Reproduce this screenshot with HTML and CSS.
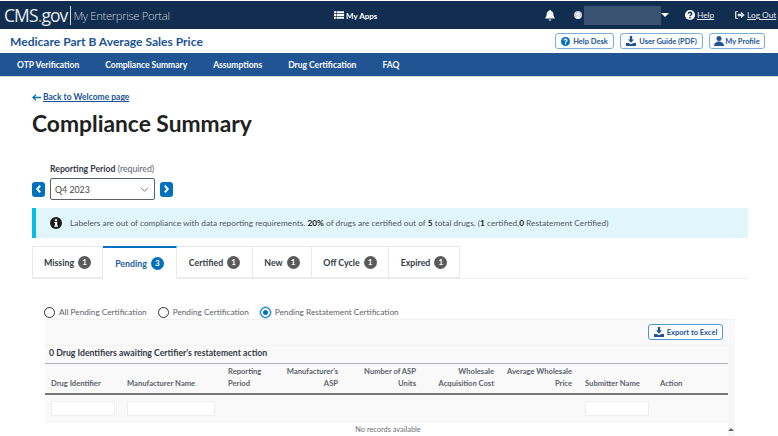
FILE: index.html
```html
<!DOCTYPE html>
<html lang="en">
<head>
<meta charset="utf-8">
<title>Compliance Summary</title>
<link rel="stylesheet" href="styles.css">
</head>
<body>
<header class="topbar">
  <div class="brand">
    <span class="logo">CMS<span class="logo-dot">.</span><span class="logo-gov">gov</span></span>
    <span class="portal">My Enterprise Portal</span>
  </div>
  <div class="apps">
    <svg class="i12" viewBox="0 0 12 10"><path fill="#fff" d="M0 0h2.500v2.400H0zM3.200 0H12v2.400H3.200zM0 3.300h2.500v2.400H0zM3.200 3.300H12v2.400H3.200zM0 6.600h2.500V9H0zM3.200 6.600H12V9H3.200z"/></svg>
    <span>My Apps</span>
  </div>
  <div class="tools">
    <svg class="bell" viewBox="0 0 10 11"><path fill="#fff" d="M5 0a1 1 0 0 1 1 1c2 .5 2.400 2 2.400 3.600 0 1.800.6 2.600 1.400 3.400v.6H.2V8C1 7.200 1.600 6.400 1.600 4.600 1.600 3 2 1.500 4 1a1 1 0 0 1 1-1zM3.700 9.400h2.600A1.300 1.300 0 0 1 3.700 9.400z"/></svg>
    <div class="user">
      <svg class="usericon" viewBox="0 0 10 10"><circle cx="5" cy="5" r="5" fill="#c9d0da"/><circle cx="5" cy="3.800" r="1.900" fill="#fff"/><path fill="#fff" d="M1.800 8.300c.5-2 5.900-2 6.400 0A5 5 0 0 1 1.800 8.300z"/></svg>
      <span class="redacted"></span>
      <span class="caret"></span>
    </div>
    <a class="help">
      <svg class="i12" viewBox="0 0 12 12"><circle cx="6" cy="6" r="6" fill="#fff"/><path fill="none" stroke="#112e51" stroke-width="1.700" d="M4 4.600c0-2.500 4-2.500 4 0 0 1.500-2 1.400-2 3"/><rect x="5.100" y="8.400" width="1.800" height="1.700" fill="#112e51"/></svg>
      <span class="ul">Help</span>
    </a>
    <a class="logout">
      <svg class="i10" viewBox="0 0 11 9"><path fill="#d5dae1" d="M3.500 0H1.500A1.500 1.500 0 0 0 0 1.500v6A1.500 1.500 0 0 0 1.500 9h2V7.800h-2V1.200h2zM6.500 1l4.300 3.500L6.500 8V6H3V3h3.500z"/></svg>
      <span class="ul">Log Out</span>
    </a>
  </div>
</header>

<div class="subhead">
  <div class="apptitle">Medicare Part B Average Sales Price</div>
  <div class="subbtns">
    <a class="btn btn-help">
      <svg class="i9" viewBox="0 0 10 10"><circle cx="5" cy="5" r="5" fill="#0071bc"/><path fill="none" stroke="#fff" stroke-width="1.400" d="M3.400 3.900c0-2 3.200-2 3.200 0 0 1.200-1.600 1.100-1.600 2.400"/><rect x="4.300" y="7" width="1.400" height="1.400" fill="#fff"/></svg>
      Help Desk
    </a>
    <a class="btn btn-guide">
      <svg class="i10" viewBox="0 0 10 10"><path fill="#205493" d="M3.800 0h2.400v3.600H8L5 6.800 2 3.600h1.800zM0 7h2.600L5 8.300 7.400 7H10v3H0z"/></svg>
      User Guide (PDF)
    </a>
    <a class="btn btn-profile">
      <svg class="i10" viewBox="0 0 10 10"><circle cx="5" cy="2.500" r="2.500" fill="#205493"/><path fill="#205493" d="M0 10c0-6 10-6 10 0z"/></svg>
      My Profile
    </a>
  </div>
</div>

<nav class="mainnav">
  <a>OTP Verification</a>
  <a>Compliance Summary</a>
  <a>Assumptions</a>
  <a>Drug Certification</a>
  <a>FAQ</a>
</nav>

<main class="content">
  <a class="back">
    <svg class="arrow" viewBox="0 0 9 7"><path fill="none" stroke="#0071bc" stroke-width="1.300" d="M9 3.500H1.500M4 .6L1 3.500 4 6.400"/></svg>
    <span class="back-text">Back to Welcome page</span>
  </a>
  <h1>Compliance Summary</h1>

  <div class="period">
    <div class="period-label"><b>Reporting Period</b> <span>(required)</span></div>
    <div class="period-row">
      <button class="pager"><svg viewBox="0 0 8 12"><path fill="none" stroke="#fff" stroke-width="2.400" d="M6 2L2.500 6 6 10"/></svg></button>
      <div class="select">
        <span>Q4 2023</span>
        <svg viewBox="0 0 12 7"><path fill="none" stroke="#555" stroke-width="1.100" d="M1 1l5 5 5-5"/></svg>
      </div>
      <button class="pager"><svg viewBox="0 0 8 12"><path fill="none" stroke="#fff" stroke-width="2.400" d="M2 2l3.500 4L2 10"/></svg></button>
    </div>
  </div>

  <div class="alert">
    <svg class="alert-icon" viewBox="0 0 12 12"><circle cx="6" cy="6" r="6" fill="#1b1b1b"/><rect x="4.900" y="2.200" width="2.200" height="2" fill="#fff"/><path fill="#fff" d="M4.300 5h2.900v3.600h.8v1.100H4.300V8.600h.7V6.100h-.7z"/></svg>
    <span>Labelers are out of compliance with data reporting requirements. <b>20%</b> of drugs are certified out of <b>5</b> total drugs. (<b>1</b> certified,<b>0</b> Restatement Certified)</span>
  </div>

  <div class="tabs">
    <div class="tab tab-missing">Missing <i class="count">1</i></div>
    <div class="tab tab-pending active">Pending <i class="count">3</i></div>
    <div class="tab tab-certified">Certified <i class="count">1</i></div>
    <div class="tab tab-new">New <i class="count">1</i></div>
    <div class="tab tab-off">Off Cycle <i class="count">1</i></div>
    <div class="tab tab-expired">Expired <i class="count">1</i></div>
  </div>

  <div class="radios">
    <label class="radio"><i class="dot"></i>All Pending Certification</label>
    <label class="radio"><i class="dot"></i>Pending Certification</label>
    <label class="radio"><i class="dot on"></i>Pending Restatement Certification</label>
  </div>

  <section class="panel">
    <div class="panel-tools">
      <a class="btn btn-export">
        <svg class="i10" viewBox="0 0 10 10"><path fill="#205493" d="M3.800 0h2.400v3.600H8L5 6.800 2 3.600h1.800zM0 7h2.600L5 8.300 7.400 7H10v3H0z"/></svg>
        Export to Excel
      </a>
    </div>
    <div class="panel-body">
      <div class="tablewrap">
        <div class="caption">0 Drug Identifiers awaiting Certifier's restatement action</div>
        <div class="grid head">
          <div>Drug Identifier</div>
          <div>Manufacturer Name</div>
          <div>Reporting<br>Period</div>
          <div class="r">Manufacturer's<br>ASP</div>
          <div class="r">Number of ASP<br>Units</div>
          <div class="r">Wholesale<br>Acquisition Cost</div>
          <div class="r">Average Wholesale<br>Price</div>
          <div>Submitter Name</div>
          <div>Action</div>
        </div>
        <div class="grid filters">
          <div><input class="filter" aria-label="Drug Identifier"></div>
          <div><input class="filter" aria-label="Manufacturer Name"></div>
          <div></div><div></div><div></div><div></div><div></div>
          <div><input class="filter" aria-label="Submitter Name"></div>
          <div></div>
        </div>
        <div class="empty">No records available</div>
      </div>
      <div class="scrollbar"><span class="up"></span></div>
    </div>
  </section>
</main>
</body>
</html>
```

FILE: styles.css
```css
* { box-sizing: border-box; }
html, body { margin: 0; height: 436px; overflow: hidden; }
body { background: #fff; font-family: "Lato", "Noto Sans", sans-serif; color: #323a45; padding-top: 1px; }
svg { display: block; flex: none; }
.i12 { width: 12px; height: 11px; }
.i10 { width: 10px; height: 10px; }
.i9 { width: 9px; height: 9px; }
.ul { text-decoration: underline; }

.topbar { height: 28px; background: #112e51; color: #fff; display: flex; align-items: center; }
.brand { display: flex; align-items: center; padding-left: 4px; width: 334px; height: 100%; }
.logo { font-size: 17.500px; font-weight: 500; letter-spacing: -0.9px; color: #e8ebef; font-family: "Open Sans", sans-serif; padding-right: 3px; border-right: 1px solid #d5dae1; line-height: 20px; height: 19px; display: flex; align-items: center; }
.logo-dot { color: #9fb83c; }
.logo-gov { font-weight: 400; }
.portal { font-size: 11.300px; color: #c9d0da; padding-left: 2px; font-family: "Open Sans", sans-serif; font-weight: 300; letter-spacing: -0.35px; }
.apps { display: flex; align-items: center; gap: 2px; font-size: 8px; font-weight: 700; padding-top: 1px; width: 211px; }
.apps .i12 { width: 10px; height: 9px; }
.tools { display: flex; align-items: center; font-size: 8.300px; }
.bell { width: 10px; height: 11px; margin-right: 19px; }
.user { display: flex; align-items: center; width: 111px; height: 19px; }
.usericon { width: 8px; height: 8px; margin-top: -1px; }
.redacted { width: 77px; height: 19px; background: #3a5272; margin-left: 2px; }
.caret { width: 0; height: 0; border: 4px solid transparent; border-top: 4px solid #fff; border-bottom: 0; }
.help { display: flex; align-items: center; gap: 2px; width: 50px; color: #e4e7ec; }
.help .i12 { width: 10px; height: 10px; }
.logout { display: flex; align-items: center; gap: 2px; color: #e4e7ec; }

.subhead { height: 24px; display: flex; align-items: center; justify-content: space-between; padding: 0 13px 0 10px; }
.apptitle { font-size: 12.050px; font-weight: 700; color: #205493; }
.subbtns { display: flex; gap: 6px; }
.btn { display: flex; align-items: center; justify-content: center; gap: 3px; height: 16px; border: 1.500px solid #79afd9; border-radius: 3px; font-size: 7.500px; font-weight: 700; color: #205493; background: #fff; }
.btn-help { width: 59px; }
.btn-guide { width: 83px; }
.btn-profile { width: 56px; gap: 1px; }

.mainnav { height: 24px; background: #205493; display: flex; align-items: center; padding-left: 17px; gap: 26px; font-size: 8.500px; font-weight: 700; color: #fff; border-bottom: 1px solid #cfd8e3; }

.content { padding: 0 30px 0 32px; }
.back { display: flex; align-items: center; gap: 2px; margin-top: 13px; height: 14px; font-size: 8.500px; font-weight: 700; color: #205493; }
.arrow { width: 9px; height: 7px; }
.back-text { text-decoration: underline; }
h1 { margin: 5px 0 0; font-size: 22.800px; line-height: 28px; font-weight: 700; color: #212121; }

.period { margin-top: 26px; height: 45px; }
.period-label { padding-left: 18px; font-size: 8.700px; line-height: 12px; color: #5b616b; height: 12px; }
.period-label b { color: #323a45; font-weight: 700; }
.period-row { display: flex; align-items: center; margin-top: 3px; }
.pager { width: 13px; height: 15px; padding: 0; border: 0; border-radius: 3px; background: #0071bc; display: flex; align-items: center; justify-content: center; }
.pager svg { width: 7px; height: 10px; }
.select { width: 105px; height: 22px; margin: 0 5px; border: 1.500px solid #5b616b; border-radius: 2px; display: flex; align-items: center; justify-content: space-between; padding: 0 5px 0 4px; font-size: 8.800px; color: #494440; }
.select svg { width: 9px; height: 5px; }

.alert { height: 30px; background: #e1f6fb; border-left: 4px solid #02bfe7; display: flex; align-items: center; padding-left: 14px; gap: 8px; font-size: 8.320px; color: #4f5560; }
.alert b { color: #212121; font-weight: 700; }
.alert-icon { width: 12px; height: 12px; }

.tabs { display: flex; margin-top: 8px; height: 33px; border-bottom: 1px solid #eee; }
.tab { height: 32px; display: flex; align-items: center; justify-content: center; gap: 4px; border: 1px solid #e9e9e9; border-left: 0; font-size: 8.800px; font-weight: 700; color: #323a45; background: #fff; }
.tab-missing { width: 71px; border-left: 1px solid #e9e9e9; }
.tab-pending { width: 74px; }
.tab-certified { width: 76px; }
.tab-new { width: 59px; }
.tab-off { width: 77px; }
.tab-expired { width: 71px; }
.tab.active { color: #205e9e; border-top: 2px solid #0071bc; border-bottom-color: #fff; height: 33px; }
.count { width: 13px; height: 13px; border-radius: 50%; background: #5b5b5b; color: #fff; font-style: normal; font-size: 8px; font-weight: 700; display: flex; align-items: center; justify-content: center; }
.active .count { background: #0071bc; }

.radios { display: flex; height: 14px; margin-top: 26px; padding-left: 12px; gap: 11px; font-size: 8.240px; color: #5b616b; align-items: center; }
.radio { display: flex; align-items: center; gap: 4px; }
.dot { width: 11px; height: 11px; border-radius: 50%; border: 1px solid #333; background: #fff; }
.dot.on { border: 1px solid #0071bc; box-shadow: inset 0 0 0 2px #fff; background: #0071bc; outline: 1px solid #a9d3ee; }

.panel { margin: 0 13px; height: 117px; background: #f9f9f9; border-top: 1px solid #f1f1f1; }
.panel-tools { height: 25px; display: flex; justify-content: flex-end; align-items: flex-start; padding-right: 12px; padding-top: 4px; }
.btn-export { width: 75px; height: 16px; border-color: #4f97ce; }
.panel-body { display: flex; height: 92px; }
.tablewrap { width: 683px; }
.caption { height: 19px; display: flex; align-items: center; padding: 0 0 5px 4px; font-size: 8.700px; font-weight: 700; color: #323a45; border-top: 1px solid #f2f2f2; border-bottom: 1px solid #aeb0b5; }
.grid { display: grid; grid-template-columns: 76px 101px 58px 64px 78px 78px 78px 76px 74px; }
.head { height: 31px; font-size: 7.600px; font-weight: 700; line-height: 11.500px; color: #5b616b; align-items: end; padding-bottom: 4px; border-bottom: 2px solid #767676; }
.head > div { padding: 0 6px; }
.head .r { text-align: right; }
.head > div:nth-child(n+4):nth-child(-n+7) { padding-left: 0; white-space: nowrap; }
.head > div:nth-child(8) { padding-left: 7px; }
.filters { height: 26px; align-items: center; padding-top: 1px; }
.filters > div { padding: 0 6px; }
.filters > div:nth-child(8) { padding-left: 7px; }
.filter { display: block; width: 64px; height: 15px; padding: 0; border: 1px solid #eeeeee; background: #fff; }
.filters > div:nth-child(2) .filter { width: 88px; }
.empty { height: 16px; background: #fff; border-top: 1px solid #efefef; font-size: 7.400px; color: #6b6f75; display: flex; align-items: center; justify-content: center; padding-left: 3px; }
.scrollbar { width: 7px; background: #f7f7f7; position: relative; }
.up { position: absolute; bottom: 6px; left: 0; width: 0; height: 0; border: 3px solid transparent; border-bottom: 3px solid #666; border-top: 0; }
```
